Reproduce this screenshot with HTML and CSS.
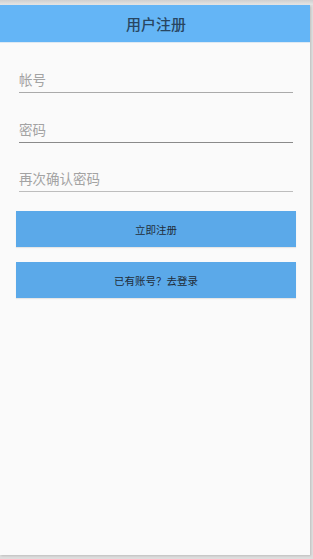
FILE: index.html
```html
<!DOCTYPE html>
<html lang="zh-CN">
<head>
  <meta charset="UTF-8" />
  <meta name="viewport" content="width=device-width, initial-scale=1.0"/>
  <title>用户注册</title>
  <link rel="stylesheet" href="styles.css">
</head>
<body>
  <div class="screen">
    <header class="appbar">
      <h1>用户注册</h1>
    </header>
    <main class="form">
      <input type="text" class="field field-user" placeholder="帐号" />
      <input type="password" class="field field-pass" placeholder="密码" />
      <input type="password" class="field field-confirm" placeholder="再次确认密码" />
      <button class="btn btn-register">立即注册</button>
      <button class="btn btn-login">已有账号？去登录</button>
    </main>
  </div>
</body>
</html>
```

FILE: styles.css
```css
html, body {
  margin: 0;
  height: 100%;
}
body {
  background: linear-gradient(to bottom, #cfcfcf 0, #e6e6e6 5px, #dedede 5px);
  font-family: "Noto Sans CJK SC", "Noto Sans", sans-serif;
  overflow: hidden;
}
.screen {
  width: 310px;
  height: 550px;
  margin-top: 5px;
  background-color: #fafafa;
  box-shadow: 1px 1px 2px rgba(0, 0, 0, 0.15);
}
.appbar {
  height: 37px;
  background-color: #64b5f6;
  border-bottom: 1px solid #dde9f3;
  display: flex;
  align-items: center;
  justify-content: center;
}
.appbar h1 {
  margin: 0;
  font-size: 15px;
  font-weight: 500;
  color: #284662;
  padding-left: 2px;
}
.form {
  display: flex;
  flex-direction: column;
  padding: 29px 14px 0 16px;
}
.field {
  height: 15px;
  margin: 0 3px 28.5px 3px;
  padding: 0 0 5px 0;
  border: none;
  border-bottom: 1px solid #aaa;
  background: transparent;
  font-family: inherit;
  font-size: 13.5px;
  line-height: 15px;
  color: #333;
  outline: none;
}
.field::placeholder {
  color: #a3a3a3;
}
.field-pass {
  border-bottom-color: #8a8a8a;
}
.field-confirm {
  border-bottom-color: #bdbdbd;
  margin-bottom: 19px;
}
.btn {
  height: 36px;
  border: none;
  background-color: #5ba9e9;
  color: #1f2d3a;
  font-family: inherit;
  font-size: 10.5px;
  box-shadow: 0 1px 1px rgba(0, 0, 0, 0.08);
  margin-bottom: 15px;
}
```
